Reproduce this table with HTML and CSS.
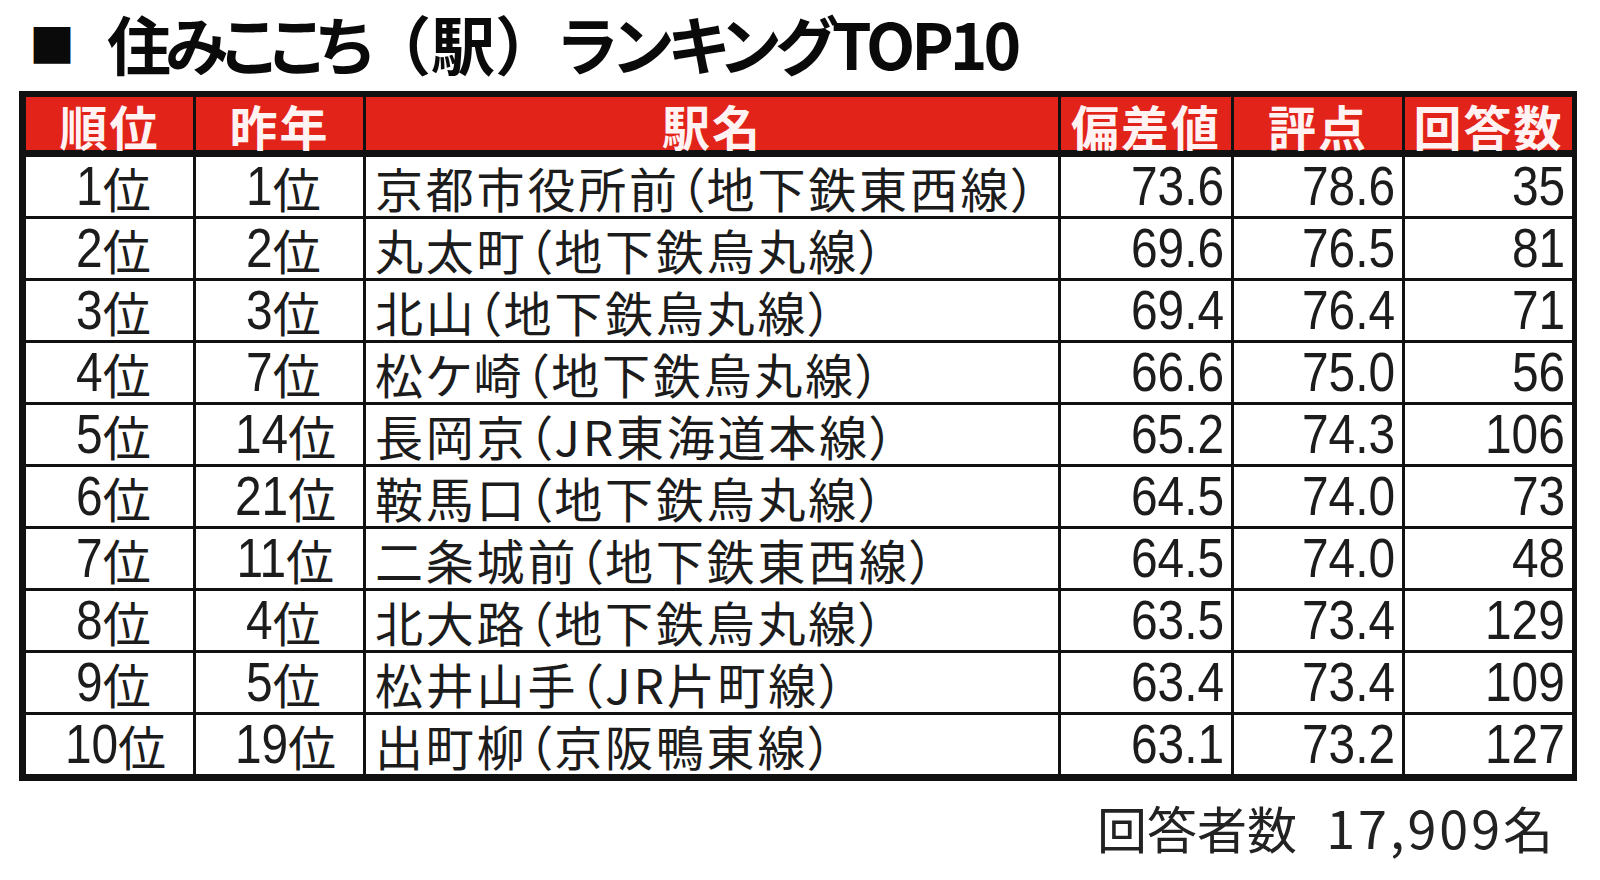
FILE: index.html
```html
<!DOCTYPE html>
<html lang="ja">
<head>
<meta charset="utf-8">
<title>住みここち（駅）ランキングTOP10</title>
<link rel="stylesheet" href="styles.css">
</head>
<body>
<div class="page">
  <h1 class="title"><span class="sq">■</span><span class="tt"><span class="kana1">住みここち</span><span class="brk">（駅）</span><span class="kana2">ランキングTOP10</span></span></h1>
  <div class="tbl">
    <div class="th">順位</div><div class="th">昨年</div><div class="th">駅名</div><div class="th">偏差値</div><div class="th">評点</div><div class="th">回答数</div>

    <div class="td c"><span class="n">1</span>位</div><div class="td c"><span class="n">1</span>位</div><div class="td l">京都市役所前（地下鉄東西線）</div><div class="td r"><span class="n">73.6</span></div><div class="td r"><span class="n">78.6</span></div><div class="td r"><span class="n">35</span></div>

    <div class="td c"><span class="n">2</span>位</div><div class="td c"><span class="n">2</span>位</div><div class="td l">丸太町（地下鉄烏丸線）</div><div class="td r"><span class="n">69.6</span></div><div class="td r"><span class="n">76.5</span></div><div class="td r"><span class="n">81</span></div>

    <div class="td c"><span class="n">3</span>位</div><div class="td c"><span class="n">3</span>位</div><div class="td l">北山（地下鉄烏丸線）</div><div class="td r"><span class="n">69.4</span></div><div class="td r"><span class="n">76.4</span></div><div class="td r"><span class="n">71</span></div>

    <div class="td c"><span class="n">4</span>位</div><div class="td c"><span class="n">7</span>位</div><div class="td l">松ケ崎（地下鉄烏丸線）</div><div class="td r"><span class="n">66.6</span></div><div class="td r"><span class="n">75.0</span></div><div class="td r"><span class="n">56</span></div>

    <div class="td c"><span class="n">5</span>位</div><div class="td c"><span class="n">14</span>位</div><div class="td l">長岡京（JR東海道本線）</div><div class="td r"><span class="n">65.2</span></div><div class="td r"><span class="n">74.3</span></div><div class="td r"><span class="n">106</span></div>

    <div class="td c"><span class="n">6</span>位</div><div class="td c"><span class="n">21</span>位</div><div class="td l">鞍馬口（地下鉄烏丸線）</div><div class="td r"><span class="n">64.5</span></div><div class="td r"><span class="n">74.0</span></div><div class="td r"><span class="n">73</span></div>

    <div class="td c"><span class="n">7</span>位</div><div class="td c"><span class="n">11</span>位</div><div class="td l">二条城前（地下鉄東西線）</div><div class="td r"><span class="n">64.5</span></div><div class="td r"><span class="n">74.0</span></div><div class="td r"><span class="n">48</span></div>

    <div class="td c"><span class="n">8</span>位</div><div class="td c"><span class="n">4</span>位</div><div class="td l">北大路（地下鉄烏丸線）</div><div class="td r"><span class="n">63.5</span></div><div class="td r"><span class="n">73.4</span></div><div class="td r"><span class="n">129</span></div>

    <div class="td c"><span class="n">9</span>位</div><div class="td c"><span class="n">5</span>位</div><div class="td l">松井山手（JR片町線）</div><div class="td r"><span class="n">63.4</span></div><div class="td r"><span class="n">73.4</span></div><div class="td r"><span class="n">109</span></div>

    <div class="td c"><span class="n">10</span>位</div><div class="td c"><span class="n">19</span>位</div><div class="td l">出町柳（京阪鴨東線）</div><div class="td r"><span class="n">63.1</span></div><div class="td r"><span class="n">73.2</span></div><div class="td r"><span class="n">127</span></div>
  </div>
  <div class="foot">回答者数 <span class="fnum">17,909</span>名</div>
</div>
</body>
</html>
```

FILE: styles.css
```css
html, body {
  margin: 0;
  padding: 0;
  background: #ffffff;
}

body {
  font-family: "Noto Sans CJK JP", "Noto Sans", sans-serif;
  color: #1c1c1c;
}

.page {
  width: 1600px;
  height: 880px;
  padding-left: 19px;
  box-sizing: border-box;
}

.title {
  margin: 0;
  height: 91px;
  box-sizing: border-box;
  padding-bottom: 8px;
  display: flex;
  align-items: center;
  font-weight: 700;
  color: #0a0a0a;
  line-height: 1;
}

.sq {
  font-size: 46px;
  margin-left: 10px;
  width: 78px;
}

.tt {
  font-size: 64px;
}

.kana1 {
  font-feature-settings: "palt";
  letter-spacing: -6px;
}

.brk {
  letter-spacing: 0;
}

.kana2 {
  font-feature-settings: "palt";
  letter-spacing: -4px;
}

.tbl {
  width: 1558px;
  box-sizing: border-box;
  display: grid;
  grid-template-columns: 167px 167px 692px 170px 168px 167px;
  grid-template-rows: 57px repeat(10, 59px);
  gap: 3px;
  background: #111111;
  border: solid #111111;
  border-width: 6px 6px 7px 7px;
}

.th {
  margin-bottom: 4px;
  background: #e2231a;
  color: #fff2f2;
  font-weight: 700;
  font-size: 48px;
  letter-spacing: 2px;
  line-height: 50px;
  display: flex;
  align-items: flex-end;
  justify-content: center;
  white-space: nowrap;
}

.td {
  background: #ffffff;
  font-size: 48px;
  line-height: 1;
  display: flex;
  align-items: center;
  white-space: nowrap;
}

.td.c {
  justify-content: center;
  padding-left: 4px;
}

.td.l {
  justify-content: flex-start;
  padding-left: 9px;
  font-feature-settings: "palt";
  letter-spacing: 2.8px;
}

.td.r {
  justify-content: flex-end;
  padding-right: 7px;
}

.n {
  display: inline-block;
  font-family: "Liberation Sans", "Noto Sans", sans-serif;
  font-size: 55px;
  line-height: 1;
  transform: scaleX(0.87);
  transform-origin: right center;
}

.foot {
  width: 1558px;
  box-sizing: border-box;
  text-align: right;
  padding-right: 24px;
  margin-top: 20px;
  font-size: 50px;
  line-height: 1;
  color: #222222;
}

.fnum {
  margin-left: 18px;
  font-size: 52px;
  letter-spacing: 3px;
}
```
